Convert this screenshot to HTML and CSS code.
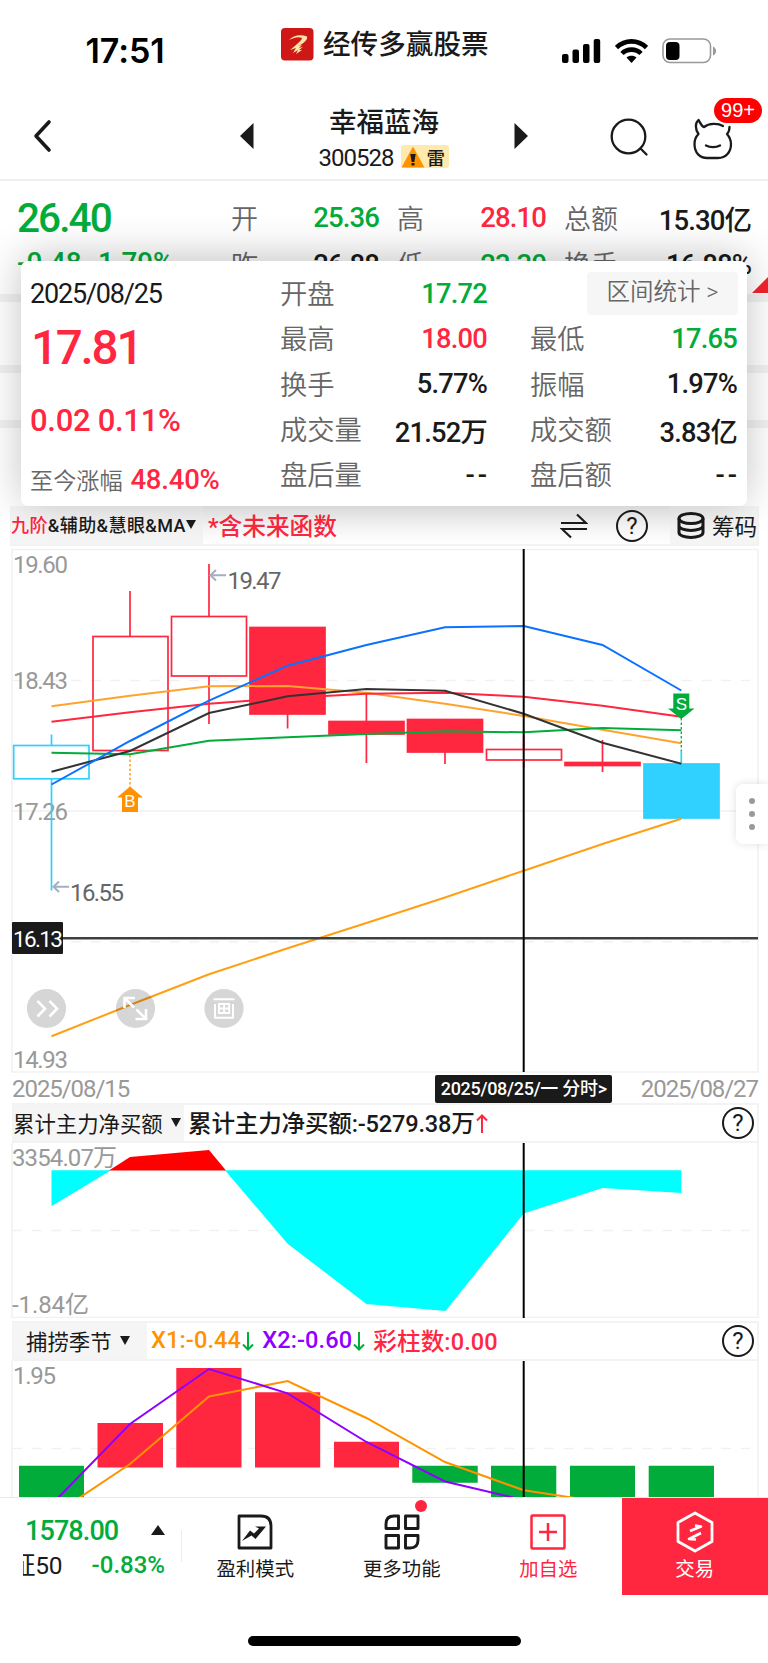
FILE: index.html
```html
<!DOCTYPE html>
<html lang="zh-CN">
<head>
<meta charset="UTF-8">
<meta name="viewport" content="width=device-width, initial-scale=1.0">
<title>幸福蓝海 300528</title>
<link rel="stylesheet" href="styles.css">
</head>
<body>
<div class="page">
    <header class="status">
        <div class="time">17:51</div>
        <div class="app-name">
            <svg class="app-logo" width="33" height="33" viewBox="0 0 33 33">
                <rect width="32.500" height="32.500" rx="4" fill="#cf1717"/>
                <path d="M8 12C12 7 20 6 26 8.500C27 12 22 16 17 18L21 17L18 20L22 19L18 22L21 22L15 26L17 22L12 25L15 20L9 22L15 17C18 14 21 12 21 10C17 8 12 10 8 12Z" fill="#fbe7a6"/>
            </svg>
            <span>经传多赢股票</span>
        </div>
        <div class="status-icons">
            <svg width="39" height="24" viewBox="0 0 39 24">
                <rect x="0" y="15" width="6.500" height="9" rx="2"/>
                <rect x="10.500" y="10.500" width="6.500" height="13.500" rx="2"/>
                <rect x="21" y="5" width="6.500" height="19" rx="2"/>
                <rect x="31.700" y="0" width="6.500" height="24" rx="2"/>
            </svg>
            <svg width="33" height="24" viewBox="0 0 33 24" fill="none" stroke="#000" stroke-width="4.600">
                <path d="M1.500 8.500C10 0.300 23 0.300 31.500 8.500"/>
                <path d="M7 14.500C12 9.300 21 9.300 26 14.500"/>
                <path d="M11.500 18.500C14 16 19 16 21.500 18.500L16.500 24Z" fill="#000" stroke="none"/>
            </svg>
            <svg width="55" height="26" viewBox="0 0 55 26">
                <rect x="1" y="1" width="47.500" height="23.500" rx="7" fill="none" stroke="#999" stroke-width="1.600"/>
                <rect x="4" y="4" width="13.500" height="18" rx="4"/>
                <path d="M51 8.500Q54 10 54 13Q54 16 51 17.500Z" fill="#999"/>
            </svg>
        </div>
    </header>

    <nav class="nav">
        <svg class="back" width="20" height="34" viewBox="0 0 20 34" fill="none" stroke="#1a1a1a" stroke-width="3.600" stroke-linecap="round" stroke-linejoin="round"><path d="M16 3L3 17L16 31"/></svg>
        <div class="stock">
            <svg width="14" height="26" viewBox="0 0 14 26"><path d="M13.500 0V26L0 13Z" fill="#1a1a1a"/></svg>
            <div class="stock-name">
                <div class="name">幸福蓝海</div>
                <div class="code">300528
                    <span class="mine"><svg width="24" height="22" viewBox="0 0 24 22"><path d="M12 0.500L23.500 21.500H0.500Z" fill="#ff9200"/><path d="M9.300 8H14.700L13.300 16H10.700ZM10.500 17H13.500V19.500H10.500Z" fill="#1a1a1a"/></svg>雷</span>
                </div>
            </div>
            <svg width="14" height="26" viewBox="0 0 14 26"><path d="M0.500 0V26L14 13Z" fill="#1a1a1a"/></svg>
        </div>
        <div class="nav-icons">
            <svg width="39" height="39" viewBox="0 0 39 39" fill="none" stroke="#1a1a1a" stroke-width="2.300" stroke-linecap="round"><circle cx="18.500" cy="18.500" r="16.800"/><path d="M30.500 30.500L36.500 36.500"/></svg>
            <div class="robot">
                <svg width="42" height="42" viewBox="0 0 42 42" fill="none" stroke="#1a1a1a" stroke-width="2.300" stroke-linecap="round" stroke-linejoin="round">
                    <path d="M31 8C26 5 17 5 12 9C9.500 8.500 8.500 5 6.500 2C3 5 3 11 6.500 16C3.500 19 2.500 22 2.500 26C2.500 35 8 40 15 40H26C34 40 39 34 39 26C39 22 37.500 19 35 16C37 14 37.500 12 37.500 9"/>
                    <path d="M14 27.500C18 29.500 24 29.500 28 27.500"/>
                </svg>
                <span class="badge">99+</span>
            </div>
        </div>
    </nav>

    <section class="quote">
        <div class="quote-row">
            <span class="price green">26.40</span>
            <span class="label">开</span><span class="value green">25.36</span>
            <span class="label">高</span><span class="value red">28.10</span>
            <span class="label">总额</span><span class="value">15.30亿</span>
        </div>
        <div class="quote-row">
            <span class="change green">-0.48 -1.79%</span>
            <span class="label">昨</span><span class="value">26.88</span>
            <span class="label">低</span><span class="value green">23.30</span>
            <span class="label">换手</span><span class="value">16.88%</span>
        </div>
        <div class="strip first"></div>
        <div class="strip second"></div>
        <div class="strip third"></div>
        <div class="corner"></div>

        <div class="card">
            <div class="card-left">
                <div class="date">2025/08/25</div>
                <div class="close">17.81</div>
                <div class="delta">0.02 0.11%</div>
                <div class="since">至今涨幅 <b>48.40%</b></div>
            </div>
            <div class="card-col">
                <div><span>开盘</span><b class="green">17.72</b></div>
                <div><span>最高</span><b class="red">18.00</b></div>
                <div><span>换手</span><b>5.77%</b></div>
                <div><span>成交量</span><b>21.52万</b></div>
                <div><span>盘后量</span><b class="none">--</b></div>
            </div>
            <div class="card-col">
                <div><a class="range">区间统计 &gt;</a></div>
                <div><span>最低</span><b class="green">17.65</b></div>
                <div><span>振幅</span><b>1.97%</b></div>
                <div><span>成交额</span><b>3.83亿</b></div>
                <div><span>盘后额</span><b class="none">--</b></div>
            </div>
        </div>
    </section>

    <div class="bar main-bar">
        <div class="select"><span class="red">九阶</span>&amp;辅助&amp;慧眼&amp;MA<i class="caret"></i></div>
        <span class="hint red">*含未来函数</span>
        <svg class="swap" width="28" height="26" viewBox="0 0 28 26" fill="none" stroke="#1a1a1a" stroke-width="2.200"><path d="M1 10H26L17 1.500M27 16H2L11 24.500"/></svg>
        <span class="help">?</span>
        <div class="chips">
            <svg width="28" height="27" viewBox="0 0 28 27" fill="none" stroke="#1a1a1a" stroke-width="3"><ellipse cx="14" cy="6.500" rx="12" ry="5"/><path d="M2 6.500V20.500C2 27 26 27 26 20.500V6.500M2 13.500C2 20 26 20 26 13.500"/></svg>
            筹码
        </div>
    </div>

    <!-- K线主图 -->
    <div class="chart-wrap">
        <svg class="chart" width="748" height="525" viewBox="11 548 748 525">
            <g class="grid">
                <rect x="12" y="549.500" width="746" height="522.500"/>
                <path d="M12 811H758"/>
                <path class="dash" d="M12 680.500H750M12 941.700H750"/>
            </g>
            <g class="axis">
                <text x="13" y="572.500" textLength="55">19.60</text>
                <text x="13" y="689" textLength="55">18.43</text>
                <text x="13" y="820" textLength="55">17.26</text>
                <text x="13" y="1067.500" textLength="55">14.93</text>
            </g>
            <g class="up">
                <path d="M130 591V636M209 564V616M209 676V724M287.600 714V728.500M366.400 692.500V763M445 752V764M523.700 735V749M523.700 760V767.500M602.500 740V772"/>
                <rect x="93" y="636.500" width="75" height="114"/>
                <rect x="171.500" y="616.500" width="75" height="59.500"/>
                <rect class="fill" x="250" y="627.500" width="75" height="86.500"/>
                <rect class="fill" x="329" y="721.500" width="75" height="12.500"/>
                <rect class="fill" x="407.500" y="719.500" width="75" height="32.500"/>
                <rect x="486.500" y="749.500" width="75" height="10.500"/>
                <rect class="fill" x="565" y="762.500" width="75" height="3"/>
            </g>
            <g class="down">
                <path d="M51.500 734.500V745M51.500 779V890.500M681.300 751V764"/>
                <rect x="13.700" y="745.500" width="75.300" height="33.300"/>
                <rect class="fill" x="644" y="764" width="75" height="54"/>
            </g>
            <g class="line">
                <polyline stroke="#ffa32e" points="51.500,706.300 130,695.700 209,686.300 287.600,686 366.400,692.700 445,703.700 523.700,716 602.500,729.700 681.300,743.300"/>
                <polyline stroke="#ff273f" points="51.500,721.700 130,712.300 209,703.700 287.600,698 366.400,693.700 445,692.700 523.700,696.700 602.500,705.700 681.300,716.700"/>
                <polyline stroke="#02ac3b" points="51.500,752.700 130,754.300 209,740.700 287.600,737.300 366.400,734 445,731.300 523.700,732.300 602.500,728 681.300,730.300"/>
                <polyline stroke="#333" points="51.500,771.700 130,751 209,713 287.600,696.300 366.400,689 445,690.700 523.700,713.700 602.500,742.700 681.300,763.700"/>
                <polyline stroke="#0a72ff" points="51.500,784.500 130,741 209,700.700 287.600,665.700 366.400,645 445,627.300 523.700,626 602.500,645 681.300,690.500"/>
                <polyline stroke="#ff9f14" points="51.500,1036.300 130,1005 209,974.300 287.600,948.300 366.400,923 445,897.500 523.700,870.700 602.500,844 681.300,818.700"/>
            </g>
            <path class="dots" stroke="#ff9200" d="M130 755V788"/>
            <path class="dots" stroke="#02ac3b" d="M681.300 718V751"/>
            <path fill="#ff9200" d="M130 786.500L143 797.500H138V812H122V797.500H117Z"/>
            <path fill="#02ac3b" d="M681.300 719L694.500 708.500H689.300V693.500H673.300V708.500H668Z"/>
            <text class="mark" x="130" y="807">B</text>
            <text class="mark" x="681.300" y="710">S</text>
            <path class="arrow" d="M226 575.300H211M216 570L210.500 575.300L216 580.500M69 886.700H54M59 881.500L53.500 886.700L59 892"/>
            <text class="extreme" x="227.500" y="589" textLength="54">19.47</text>
            <text class="extreme" x="70" y="901" textLength="54">16.55</text>
            <path stroke="#3b423e" stroke-width="2.600" d="M63 938.200H758"/>
            <path class="cross" d="M523.700 549V1072"/>
            <rect x="12" y="922" width="51" height="32" rx="1" fill="#1a1a1a"/>
            <text class="cursor-price" x="13" y="946.700" textLength="50">16.13</text>
            <g class="tool">
                <circle cx="46.500" cy="1008.500" r="19.600"/>
                <circle cx="135.500" cy="1008.500" r="19.600"/>
                <circle cx="224" cy="1008.500" r="19.600"/>
                <path d="M37.500 1001L45 1008.700L37.500 1016.500M49.500 1001L57 1008.700L49.500 1016.500"/>
                <path d="M124.500 1008V998H135M125 998.500L134 1007.500M135.500 1019H146V1009M145.500 1018.500L136.500 1009.500"/>
                <path class="thin" d="M213.500 999.300H234.500M215 1004V1017.700H233V1004M219 1004H229.200V1013H219ZM224.100 1004V1013M219 1008.500H229.200"/>
            </g>
        </svg>
        <div class="handle"><i></i><i></i><i></i></div>
    </div>
    <div class="dates">
        <span>2025/08/15</span>
        <span class="current">2025/08/25/一 分时&gt;</span>
        <span>2025/08/27</span>
    </div>

    <div class="bar">
        <div class="select fund">累计主力净买额<i class="caret"></i></div>
        <span class="reading">累计主力净买额:-5279.38万</span><svg class="trend" width="12" height="19" viewBox="0 0 12 19"><path stroke="#ff273f" d="M6 19V1.500M1 6.500L6 1.500L11 6.500"/></svg>
        <span class="help">?</span>
    </div>
    <!-- 主力净买额 -->
    <svg class="chart" width="748" height="175" viewBox="11 1143 748 175">
        <g class="grid">
            <path d="M12 1143V1317.500H758V1143"/>
            <path class="dash" d="M12 1230.500H750"/>
        </g>
        <g class="axis">
            <text x="12" y="1166" textLength="105">3354.07万</text>
            <text x="12" y="1313" textLength="77">-1.84亿</text>
        </g>
        <path fill="#0ff" d="M51.500 1170.300V1206.300L111 1170.300ZM225 1170.300L287.600 1243.700L366.400 1304L445.500 1311L523.700 1213.500L602.500 1188L681.300 1193V1170.300Z"/>
        <path fill="#f00" d="M109 1170.500L130 1157L209 1150L226 1170.500Z"/>
        <path class="cross" d="M523.700 1143V1318"/>
    </svg>

    <div class="bar season-bar">
        <div class="select season">捕捞季节<i class="caret"></i></div>
        <span class="reading orange">X1:-0.44</span><svg class="trend" width="12" height="19" viewBox="0 0 12 19"><path stroke="#02ac3b" d="M6 0V17.500M1 12.500L6 17.500L11 12.500"/></svg>
        <span class="reading purple">X2:-0.60</span><svg class="trend" width="12" height="19" viewBox="0 0 12 19"><path stroke="#02ac3b" d="M6 0V17.500M1 12.500L6 17.500L11 12.500"/></svg>
        <span class="reading red">彩柱数:0.00</span>
        <span class="help">?</span>
    </div>
    <!-- 捕捞季节 -->
    <svg class="chart" width="748" height="136" viewBox="11 1361 748 136">
        <g class="grid">
            <path d="M12 1360V1500M758 1360V1500"/>
            <path class="dash" d="M12 1448.500H750"/>
        </g>
        <g class="axis"><text x="13" y="1384" textLength="43">1.95</text></g>
        <path fill="#ff273f" d="M97.500 1423H163V1467.500H97.500ZM176.300 1368H241.500V1467.500H176.300ZM255 1392.300H320.200V1467.500H255ZM334 1441.700H399V1467.500H334Z"/>
        <path fill="#02ac3b" d="M19 1465.700H84V1500H19ZM412.300 1465.700H477.700V1482.700H412.300ZM491 1465.700H556.300V1500H491ZM570 1465.700H635V1500H570ZM648.700 1465.700H714V1500H648.700Z"/>
        <g class="line">
            <polyline stroke="#ff9200" points="76,1500 130,1464 209,1396.500 287.600,1381 366.400,1418 445,1462 523.700,1490.300 575,1498"/>
            <polyline stroke="#9000ff" points="56,1500 130,1424 209,1369 287.600,1393.300 366.400,1442 445,1481.500 523.700,1500"/>
        </g>
        <path class="cross" d="M523.700 1361V1500"/>
    </svg>

    <footer class="tabs">
        <div class="index">
            <div class="index-row"><span class="point">1578.00</span><i class="caret up-caret"></i></div>
            <div class="index-row second-row"><span class="index-name">证50</span><span class="rate">-0.83%</span></div>
        </div>
        <div class="tab">
            <svg width="36" height="36" viewBox="0 0 36 36" fill="none" stroke="#1a1a1a" stroke-width="2.800" stroke-linejoin="round"><path d="M2 2H24Q34 2 34 12V34H2Z"/><path d="M5 27L13 16.500L17 19.500L22 14.500L18 12.500H29L18.500 25L14.500 21.500Z" fill="#1a1a1a" stroke="none"/></svg>
            盈利模式
        </div>
        <div class="tab">
            <svg width="36" height="36" viewBox="0 0 36 36" fill="none" stroke="#1a1a1a" stroke-width="2.900" stroke-linejoin="round"><path d="M10 2H14.500V14.500H2V10Q2 2 10 2ZM21.500 2H34V14.500H21.500ZM2 21.500H14.500V34H2ZM21.500 21.500H34V26Q34 34 26 34H21.500Z"/></svg>
            <i class="dot"></i>
            更多功能
        </div>
        <div class="tab red">
            <svg width="36" height="36" viewBox="0 0 36 36" fill="none" stroke="#ff273f" stroke-width="2.500" stroke-linejoin="round"><rect x="1.500" y="1.500" width="33" height="33" rx="1"/><path d="M18 9V27M9 18H27"/></svg>
            加自选
        </div>
        <div class="tab trade">
            <svg width="38" height="42" viewBox="0 0 38 42" fill="none" stroke="#fff" stroke-width="2.800" stroke-linejoin="round"><path d="M19 2L36 11.500V30.500L19 40L2 30.500V11.500Z"/><path d="M14 20L25 15.500L19 14.500M25 22L13 28L20 28.500" stroke-width="2.600"/></svg>
            交易
        </div>
    </footer>
    <div class="home"></div>
</div>
</body>
</html>
```

FILE: styles.css
```css
* {
    box-sizing: border-box;
}

body {
    margin: 0;
    background: #fff;
    color: #1a1a1a;
    font-family: Roboto, "Noto Sans CJK SC", sans-serif;
}

svg {
    display: block;
    flex: none;
}

b {
    font-weight: 500;
}

.page {
    width: 768px;
    height: 1663px;
    overflow: hidden;
    display: flex;
    flex-direction: column;
}

.red { color: #ff273f; }
.green { color: #02ac3b; }
.orange { color: #ff9200; }
.purple { color: #9000ff; }

/* 状态栏 */
.status {
    height: 86px;
    display: grid;
    grid-template-columns: 250px 1fr 206px;
}

.time {
    padding-top: 31px;
    text-align: center;
    font: 600 34px/40px Inter, sans-serif;
    letter-spacing: -0.1px;
    color: #000;
}

.app-name {
    display: flex;
    align-items: center;
    gap: 9px;
    height: 34px;
    margin-top: 27px;
    padding-left: 31px;
    font-size: 27.600px;
    font-weight: 500;
}

.app-name span {
    margin-top: -4px;
}

.status-icons {
    display: flex;
    align-items: center;
    gap: 14px;
    height: 26px;
    margin-top: 38px;
}

/* 导航 */
.nav {
    height: 95px;
    display: grid;
    grid-template-columns: 230px 308px 1fr;
    border-bottom: 2px solid #f0f0f0;
}

.back {
    margin: 33px 0 0 33px;
}

.stock {
    display: flex;
    justify-content: space-between;
    padding: 0 10px;
}

.stock > svg {
    margin-top: 37px;
}

.stock-name {
    text-align: center;
}

.name {
    margin-top: 17px;
    font-size: 27.500px;
    line-height: 40px;
    font-weight: 500;
}

.code {
    display: flex;
    align-items: center;
    gap: 8px;
    height: 30px;
    font-size: 24px;
    letter-spacing: -1px;
}

.mine {
    display: flex;
    align-items: center;
    gap: 1px;
    width: 48px;
    height: 23px;
    margin-top: -3px;
    border-radius: 3px;
    background: #ffe9ad;
    font-size: 18.500px;
    font-weight: 500;
    letter-spacing: 0;
}

.nav-icons {
    display: flex;
    padding: 32px 0 0 72px;
    gap: 43px;
}

.robot {
    position: relative;
}

.badge {
    position: absolute;
    left: 22px;
    top: -20px;
    width: 48px;
    height: 25px;
    border-radius: 13px;
    background: #f00;
    color: #fff;
    font: 20px/25px "Liberation Sans", sans-serif;
    text-align: center;
}

/* 报价 */
.quote {
    position: relative;
    height: 325px;
    padding-top: 13px;
}

.quote-row {
    display: grid;
    grid-template-columns: 214px 60px 88px 78px 89px 78px 127px;
    align-items: center;
    height: 47px;
    padding-left: 17px;
    font-size: 27.500px;
}

.quote-row .label {
    margin-top: -2px;
    color: #666;
    font-size: 27px;
    font-weight: 350;
}

.quote-row .label:nth-child(n+4) {
    padding-left: 18px;
}

.value {
    margin-top: -1px;
    text-align: right;
    letter-spacing: -0.9px;
    font-weight: 500;
    white-space: nowrap;
}

.price {
    font-size: 40.500px;
    font-weight: 500;
    letter-spacing: -1.900px;
}

.change {
    margin-top: -4px;
    font-weight: 500;
    font-size: 27.800px;
}

.strip {
    height: 8px;
    background: #f2f2f2;
}

.strip.first { margin-top: 6px; }
.strip.second { margin-top: 63px; }
.strip.third { margin-top: 47px; }

.corner {
    position: absolute;
    right: 0;
    top: 96px;
    width: 16px;
    height: 16px;
    background: #f5222d;
    clip-path: polygon(100% 0, 100% 100%, 0 100%);
}

.card {
    position: absolute;
    left: 21px;
    top: 80px;
    width: 726px;
    height: 245px;
    padding: 10px 10px 0;
    display: grid;
    grid-template-columns: 249px 207px 206px;
    border-radius: 7px;
    background: #fff;
    box-shadow: 0 -4px 42px rgba(0, 0, 0, 0.24);
}

.card-col + .card-col {
    margin-left: 43px;
    width: 207px;
}

.card-col > div {
    display: flex;
    justify-content: space-between;
    align-items: center;
    height: 45.300px;
    font-size: 27.300px;
}

.card-col span {
    margin-top: -3px;
    color: #666;
    font-weight: 350;
}

.card-col b {
    letter-spacing: -0.8px;
}

.card-col .none {
    letter-spacing: 3px;
    margin-right: -3px;
}

.range {
    width: 151px;
    height: 43px;
    margin-left: auto;
    margin-right: -1px;
    border-radius: 4px;
    background: #f6f6f6;
    color: #666;
    font-size: 23.500px;
    font-weight: 350;
    line-height: 41px;
    text-align: center;
}

.date {
    margin-left: -1px;
    font-size: 27px;
    line-height: 47px;
    letter-spacing: -1.200px;
}

.close {
    margin-top: 2px;
    color: #ff273f;
    font-size: 47.500px;
    line-height: 56px;
    font-weight: 500;
    letter-spacing: -2.200px;
}

.delta {
    margin: 20px 0 0 -1px;
    color: #ff273f;
    font-size: 31px;
    line-height: 50px;
    font-weight: 500;
    letter-spacing: -0.3px;
}

.since {
    margin: 11px 0 0 -1px;
    color: #666;
    font-size: 23.200px;
    line-height: 45px;
    font-weight: 350;
    white-space: nowrap;
}

.since b {
    margin-left: 2px;
    color: #ff273f;
    font-size: 27.500px;
    letter-spacing: -0.2px;
}

/* 指标栏 */
.bar {
    display: flex;
    align-items: center;
    width: 747px;
    height: 40px;
    margin-left: 12px;
    padding-right: 3px;
    border: 2px solid #f3f3f3;
    border-left-width: 1px;
}

.main-bar {
    width: 749px;
    height: 40px;
    margin: 0 0 2px 10px;
    padding-right: 0;
    border-top: 0;
    background: linear-gradient(rgba(0, 0, 0, 0.06), transparent);
}

.select {
    display: flex;
    align-items: center;
    flex: none;
    width: 192px;
    height: 100%;
    padding-bottom: 2px;
    background: #f5f5f5;
    font-size: 18px;
    font-weight: 500;
    letter-spacing: 0.4px;
    white-space: nowrap;
}

.fund {
    width: 171px;
    font-size: 21.400px;
    font-weight: 400;
    letter-spacing: 0;
}

.season {
    width: 134px;
    padding-left: 13px;
    font-size: 21.400px;
    font-weight: 400;
    letter-spacing: 0;
}

.caret {
    flex: none;
    width: 0;
    height: 0;
    border: 5.500px solid transparent;
    border-top: 9px solid #1a1a1a;
    border-bottom: 0;
}

.fund .caret,
.season .caret {
    margin-left: 8px;
}

.hint {
    margin: 0 0 1px 5px;
    font-size: 23.700px;
    font-weight: 500;
}

.swap {
    margin-left: auto;
    margin-right: 28px;
    position: relative;
    top: 1px;
}

.help {
    flex: none;
    width: 32px;
    height: 32px;
    margin-left: auto;
    border: 2px solid #1a1a1a;
    border-radius: 50%;
    font-size: 24px;
    line-height: 28px;
    text-align: center;
}

.main-bar .help {
    margin: 1px 22px 0 0;
}

.chips {
    display: flex;
    align-items: center;
    gap: 7px;
    width: 87px;
    height: 100%;
    padding-left: 7px;
    background: #f5f5f5;
    font-size: 22.500px;
    white-space: nowrap;
}

.reading {
    margin: 0 0 2px 4px;
    font-size: 23.600px;
    font-weight: 500;
    letter-spacing: -0.2px;
}

.season-bar .reading {
    letter-spacing: 0.1px;
}

.season-bar .trend ~ .reading {
    margin-left: 8px;
}

.trend {
    margin-left: 1px;
    fill: none;
    stroke-width: 2;
}

/* 图表 */
.chart-wrap {
    position: relative;
}

.chart {
    margin-left: 11px;
}

.grid rect,
.grid path {
    fill: none;
    stroke: #f1f1f1;
    stroke-width: 1.500;
}

.grid .dash {
    stroke-dasharray: 10 9.700;
}

.axis text {
    fill: #999;
    font-size: 24px;
}

.up,
.down {
    fill: none;
    stroke: #ff273f;
    stroke-width: 1.700;
}

.up .fill { fill: #ff273f; }

.down { stroke: #30d0ff; }
.down .fill { fill: #30d0ff; }

.line {
    fill: none;
    stroke-width: 2;
}

.dots {
    stroke-width: 1.300;
    stroke-dasharray: 2.500 2;
}

.mark {
    fill: #fff;
    font-family: "Liberation Sans", sans-serif;
    font-size: 17px;
    text-anchor: middle;
}

.arrow {
    fill: none;
    stroke: #a5afc0;
    stroke-width: 2;
}

.extreme {
    fill: #666;
    font-size: 24px;
}

.cross {
    stroke: #000;
    stroke-width: 2;
}

.cursor-price {
    fill: #fff;
    font-size: 22.500px;
}

.tool circle {
    fill: rgba(0, 0, 0, 0.16);
}

.tool path {
    fill: none;
    stroke: #fff;
    stroke-width: 2.600;
}

.tool .thin {
    stroke-width: 1.900;
}

.handle {
    position: absolute;
    right: 0;
    top: 236px;
    display: flex;
    flex-direction: column;
    align-items: center;
    justify-content: center;
    gap: 7px;
    width: 32px;
    height: 60px;
    border-radius: 7px 0 0 7px;
    background: #fff;
    box-shadow: 0 0 8px rgba(0, 0, 0, 0.12);
}

.handle i {
    width: 6px;
    height: 6px;
    border-radius: 50%;
    background: #999;
}

.dates {
    display: flex;
    align-items: center;
    height: 30px;
    padding: 2px 10px 0 12px;
    color: #999;
    font-size: 24px;
    letter-spacing: -1.050px;
}

.current {
    width: 177px;
    height: 28px;
    margin: 0 auto 0 306px;
    border-radius: 2px;
    background: #1a1a1a;
    color: #fff;
    font-size: 18px;
    font-weight: 500;
    letter-spacing: -0.3px;
    line-height: 27px;
    text-align: center;
    white-space: nowrap;
}

.season-bar {
    margin-top: 3px;
}

/* 底部 */
.tabs {
    display: flex;
    height: 98px;
    border-top: 1px solid #e8e8e8;
}

.index {
    width: 182px;
    padding: 16px 17px 0 25px;
    background: linear-gradient(#eee, #eee) 181px 32px / 1px 32px no-repeat;
}

.index-row {
    display: flex;
    align-items: center;
    justify-content: space-between;
    height: 34px;
}

.second-row {
    margin-left: -2px;
}

.point {
    color: #02ac3b;
    font-size: 27px;
    font-weight: 500;
    letter-spacing: -0.9px;
}

.up-caret {
    border: 7.500px solid transparent;
    border-top: 0;
    border-bottom: 10px solid #1a1a1a;
    margin-top: -3px;
}

.index-name {
    overflow: hidden;
    width: 41px;
    margin-top: -4px;
    font-size: 24.500px;
    letter-spacing: -0.300px;
    text-indent: -12px;
    white-space: nowrap;
}

.rate {
    color: #02ac3b;
    font-size: 24px;
    font-weight: 500;
    letter-spacing: 0;
}

.tab {
    position: relative;
    display: flex;
    flex-direction: column;
    align-items: center;
    width: 146.500px;
    padding-top: 16px;
    font-size: 19.400px;
    line-height: 28px;
}

.tab svg {
    margin-bottom: 6px;
}

.dot {
    position: absolute;
    left: 86px;
    top: 2px;
    width: 12px;
    height: 12px;
    border-radius: 50%;
    background: #ff273f;
}

.trade {
    padding-top: 13px;
    background: #ff273f;
    color: #fff;
}

.trade svg {
    margin-bottom: 3px;
}

.home {
    width: 273px;
    height: 10px;
    margin: 41px auto 0;
    border-radius: 5px;
    background: #000;
}
```
